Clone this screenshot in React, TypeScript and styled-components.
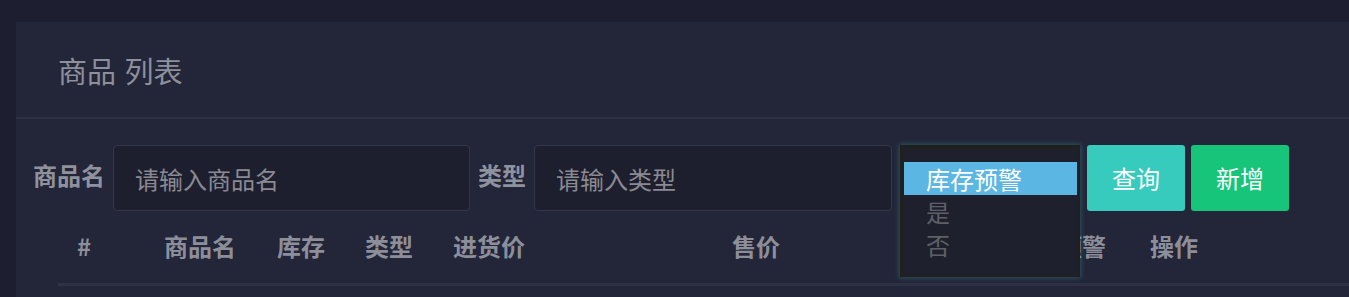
import React from "react";
import styled, { createGlobalStyle } from "styled-components";

const Global = createGlobalStyle`
  html, body { margin: 0; padding: 0; background: #1d1e2f; }
  body { font-family: "Noto Sans CJK SC", "Noto Sans", sans-serif; }
  * { box-sizing: border-box; }
`;

const Page = styled.div`
  min-height: 100vh;
  padding: 22px 0 0 16px;
  display: flex;
  flex-direction: column;
`;

const Card = styled.div`
  flex: 1;
  background: #232538;
  display: flex;
  flex-direction: column;
`;

const CardHeader = styled.div`
  height: 97px;
  padding: 2px 0 0 42px;
  display: flex;
  align-items: center;
  border-bottom: 2px solid #2e3044;
`;

const Title = styled.h2`
  margin: 0;
  font-size: 29px;
  line-height: 1;
  font-weight: 400;
  color: #8d909b;
  word-spacing: 2px;
`;

const CardBody = styled.div`
  padding: 26px 0 0 17px;
`;

const FilterRow = styled.div`
  display: flex;
  align-items: center;
  gap: 8px;
  height: 66px;
`;

const Label = styled.label`
  font-size: 24px;
  line-height: 1;
  font-weight: 700;
  color: #8f929d;
  padding-bottom: 6px;
  white-space: nowrap;
`;

const Input = styled.input<{ $w: number }>`
  width: ${(p) => p.$w}px;
  height: 66px;
  border: 1px solid #34364a;
  border-radius: 4px;
  background: #1e1f2e;
  padding: 0 0 0 21px;
  font-family: inherit;
  font-size: 24px;
  color: #c0c2c8;
  outline: none;
  &::placeholder { color: #8a8a93; }
`;

const SelectWrap = styled.div`
  position: relative;
  width: 180px;
  height: 66px;
`;

const ListBox = styled.div`
  position: absolute;
  top: 0;
  left: 0;
  width: 180px;
  height: 132px;
  z-index: 2;
  background: #1f202e;
  border: 4px solid #1f201f;
  border-right-width: 3px;
  border-bottom-width: 2px;
  box-shadow: 0 0 5px 1px rgba(60, 200, 190, 0.3);
  padding-top: 13px;
`;

const Option = styled.div<{ $active?: boolean }>`
  height: 33px;
  line-height: 33px;
  padding-left: 22px;
  font-size: 24px;
  color: ${(p) => (p.$active ? "#ffffff" : "#5f6066")};
  background: ${(p) => (p.$active ? "#5cb6e4" : "transparent")};
`;

const Button = styled.button<{ $bg: string }>`
  width: 98px;
  height: 66px;
  border: none;
  border-radius: 3px;
  background: ${(p) => p.$bg};
  color: #ffffff;
  font-family: inherit;
  font-size: 24px;
  line-height: 1;
  padding: 0;
  cursor: pointer;
`;

const ButtonGap = styled.div`
  display: flex;
  gap: 6px;
  margin-left: -1px;
`;

const Table = styled.div`
  margin-left: 25px;
`;

const HeadRow = styled.div`
  display: grid;
  grid-template-columns: 87px 113px 88px 88px 279px 278px 140px 1fr;
  height: 75px;
  padding-bottom: 2px;
  align-items: center;
  border-bottom: 3px solid #2e3044;
`;

const Th = styled.div`
  padding-left: 19px;
  font-size: 24px;
  line-height: 1;
  font-weight: 700;
  color: #8c8f9a;
  white-space: nowrap;
`;

const columns = ["#", "商品名", "库存", "类型", "进货价", "售价", "库存预警", "操作"];

export default function App() {
  return (
    <>
      <Global />
      <Page>
        <Card>
          <CardHeader>
            <Title>商品 列表</Title>
          </CardHeader>
          <CardBody>
            <FilterRow>
              <Label>商品名</Label>
              <Input $w={357} placeholder="请输入商品名" />
              <Label>类型</Label>
              <Input $w={358} placeholder="请输入类型" />
              <SelectWrap>
                <ListBox>
                  <Option $active>库存预警</Option>
                  <Option>是</Option>
                  <Option>否</Option>
                </ListBox>
              </SelectWrap>
              <ButtonGap>
                <Button $bg="#36cbbc">查询</Button>
                <Button $bg="#16c57a">新增</Button>
              </ButtonGap>
            </FilterRow>
            <Table>
              <HeadRow>
                {columns.map((c) => (
                  <Th key={c}>{c}</Th>
                ))}
              </HeadRow>
            </Table>
          </CardBody>
        </Card>
      </Page>
    </>
  );
}
